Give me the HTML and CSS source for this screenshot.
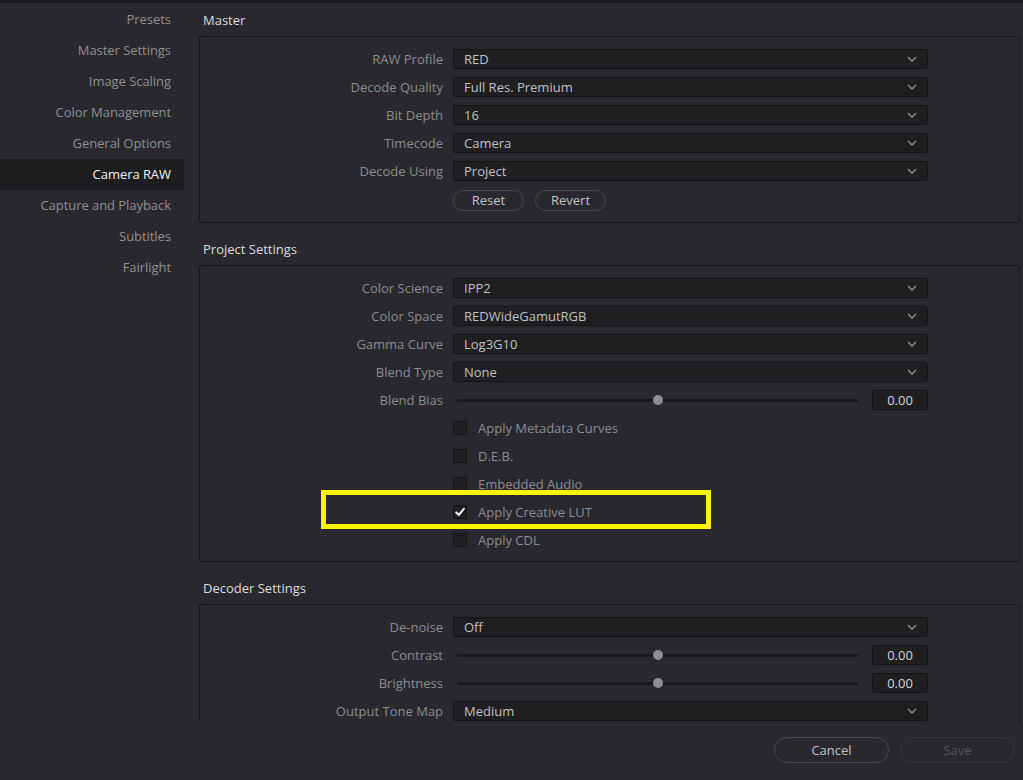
FILE: index.html
```html
<!DOCTYPE html>
<html>
<head>
<meta charset="utf-8">
<link rel="stylesheet" href="styles.css">
</head>
<body>
<div class="app">
  <div class="content">
    <nav class="sidebar">
      <div class="nav-item">Presets</div>
      <div class="nav-item">Master Settings</div>
      <div class="nav-item">Image Scaling</div>
      <div class="nav-item">Color Management</div>
      <div class="nav-item">General Options</div>
      <div class="nav-item active">Camera RAW</div>
      <div class="nav-item">Capture and Playback</div>
      <div class="nav-item">Subtitles</div>
      <div class="nav-item">Fairlight</div>
    </nav>
    <main class="main">
      <section class="section">
        <h2 class="section-title">Master</h2>
        <div class="box">
          <div class="row"><span class="label">RAW Profile</span><div class="select"><span>RED</span><svg class="chev" width="10" height="6" viewBox="0 0 10 6"><polyline points="1,1 5,5 9,1"/></svg></div></div>
          <div class="row"><span class="label">Decode Quality</span><div class="select"><span>Full Res. Premium</span><svg class="chev" width="10" height="6" viewBox="0 0 10 6"><polyline points="1,1 5,5 9,1"/></svg></div></div>
          <div class="row"><span class="label">Bit Depth</span><div class="select"><span>16</span><svg class="chev" width="10" height="6" viewBox="0 0 10 6"><polyline points="1,1 5,5 9,1"/></svg></div></div>
          <div class="row"><span class="label">Timecode</span><div class="select"><span>Camera</span><svg class="chev" width="10" height="6" viewBox="0 0 10 6"><polyline points="1,1 5,5 9,1"/></svg></div></div>
          <div class="row"><span class="label">Decode Using</span><div class="select"><span>Project</span><svg class="chev" width="10" height="6" viewBox="0 0 10 6"><polyline points="1,1 5,5 9,1"/></svg></div></div>
          <div class="row row-buttons"><span class="label"></span><div class="buttons"><button class="pill">Reset</button><button class="pill">Revert</button></div></div>
        </div>
      </section>

      <section class="section">
        <h2 class="section-title">Project Settings</h2>
        <div class="box">
          <div class="row"><span class="label">Color Science</span><div class="select"><span>IPP2</span><svg class="chev" width="10" height="6" viewBox="0 0 10 6"><polyline points="1,1 5,5 9,1"/></svg></div></div>
          <div class="row"><span class="label">Color Space</span><div class="select"><span>REDWideGamutRGB</span><svg class="chev" width="10" height="6" viewBox="0 0 10 6"><polyline points="1,1 5,5 9,1"/></svg></div></div>
          <div class="row"><span class="label">Gamma Curve</span><div class="select"><span>Log3G10</span><svg class="chev" width="10" height="6" viewBox="0 0 10 6"><polyline points="1,1 5,5 9,1"/></svg></div></div>
          <div class="row"><span class="label">Blend Type</span><div class="select"><span>None</span><svg class="chev" width="10" height="6" viewBox="0 0 10 6"><polyline points="1,1 5,5 9,1"/></svg></div></div>
          <div class="row"><span class="label">Blend Bias</span><div class="slider"><div class="track"><div class="thumb"></div></div><div class="value">0.00</div></div></div>
          <div class="row"><span class="label"></span><label class="check"><span class="box-check"></span><span>Apply Metadata Curves</span></label></div>
          <div class="row"><span class="label"></span><label class="check"><span class="box-check"></span><span>D.E.B.</span></label></div>
          <div class="row"><span class="label"></span><label class="check"><span class="box-check"></span><span>Embedded Audio</span></label></div>
          <div class="row highlighted"><span class="label"></span><label class="check"><span class="box-check checked"><svg width="12" height="12" viewBox="0 0 12 12"><polyline points="2.2,6.4 4.8,9 9.8,2.8"/></svg></span><span>Apply Creative LUT</span></label><div class="highlight"></div></div>
          <div class="row"><span class="label"></span><label class="check"><span class="box-check"></span><span>Apply CDL</span></label></div>
        </div>
      </section>

      <section class="section">
        <h2 class="section-title">Decoder Settings</h2>
        <div class="box">
          <div class="row"><span class="label">De-noise</span><div class="select"><span>Off</span><svg class="chev" width="10" height="6" viewBox="0 0 10 6"><polyline points="1,1 5,5 9,1"/></svg></div></div>
          <div class="row"><span class="label">Contrast</span><div class="slider"><div class="track"><div class="thumb"></div></div><div class="value">0.00</div></div></div>
          <div class="row"><span class="label">Brightness</span><div class="slider"><div class="track"><div class="thumb"></div></div><div class="value">0.00</div></div></div>
          <div class="row"><span class="label">Output Tone Map</span><div class="select"><span>Medium</span><svg class="chev" width="10" height="6" viewBox="0 0 10 6"><polyline points="1,1 5,5 9,1"/></svg></div></div>
        </div>
      </section>
    </main>
  </div>
  <footer class="footer">
    <button class="pill footer-btn">Cancel</button>
    <button class="pill footer-btn disabled">Save</button>
  </footer>
</div>
</body>
</html>
```

FILE: styles.css
```css
* { box-sizing: border-box; }

html, body {
  margin: 0;
  padding: 0;
  height: 100%;
}

body {
  background: #28282e;
  border-top: 3px solid #19191c;
  font-family: "Open Sans", "Noto Sans", sans-serif;
  font-size: 13px;
  color: #8e8e90;
  overflow: hidden;
}

.app {
  display: flex;
  flex-direction: column;
  height: 777px;
}

.content {
  display: flex;
  height: 719px;
  overflow: hidden;
}

.sidebar {
  width: 184px;
  flex: none;
  display: flex;
  flex-direction: column;
  padding-top: 1px;
}

.nav-item {
  height: 31px;
  line-height: 31px;
  text-align: right;
  padding-right: 13px;
  color: #8f8f92;
  white-space: nowrap;
  letter-spacing: -0.05px;
}

.nav-item.active {
  background: #1d1d20;
  color: #f2f2f2;
}

.main {
  flex: 1;
  padding: 7px 3px 0 15px;
  display: flex;
  flex-direction: column;
  gap: 16px;
}

.section-title {
  margin: 0 0 6px 4px;
  font-size: 13px;
  font-weight: normal;
  line-height: 20px;
  color: #dcdcdc;
}

.box {
  border: 1px solid #151518;
  border-radius: 3px;
  padding: 12px 0 11px 0;
  display: flex;
  flex-direction: column;
  gap: 8px;
}

.row {
  display: grid;
  grid-template-columns: 243px 475px;
  column-gap: 10px;
  height: 20px;
  align-items: center;
}

.row.highlighted {
  position: relative;
}

.label {
  text-align: right;
  color: #8c8c8f;
  line-height: 20px;
  white-space: nowrap;
}

.select {
  height: 20px;
  background: #1f1f21;
  border: 1px solid #131315;
  border-radius: 2px;
  display: flex;
  align-items: center;
  justify-content: space-between;
  padding: 0 10px 0 10px;
  color: #c0c0c2;
}

.chev polyline {
  fill: none;
  stroke: #8a8a8c;
  stroke-width: 1.5;
}

.row-buttons {
  height: 21px;
  margin-top: 1px;
}

.buttons {
  display: flex;
  gap: 11px;
}

.pill {
  font-family: inherit;
  font-size: 13px;
  background: transparent;
  color: #c2c2c4;
  border: 1px solid #46464b;
  border-radius: 11px;
  height: 21px;
  width: 71px;
  padding: 0;
  line-height: 19px;
}

.slider {
  display: flex;
  align-items: center;
  padding-left: 4px;
  height: 20px;
}

.track {
  flex: 1;
  height: 3px;
  background: #19191b;
  border-radius: 2px;
  position: relative;
  margin-right: 14px;
}

.thumb {
  position: absolute;
  left: 50%;
  top: 50%;
  width: 10px;
  height: 10px;
  margin: -5px 0 0 -5px;
  border-radius: 50%;
  background: #8e8e90;
}

.value {
  width: 56px;
  height: 20px;
  background: #1f1f21;
  border: 1px solid #131315;
  border-radius: 2px;
  color: #d6d6d8;
  text-align: center;
  line-height: 18px;
}

.check {
  display: flex;
  align-items: center;
  gap: 11px;
  color: #8c8c8f;
}

.box-check {
  width: 14px;
  height: 14px;
  background: #1f1f21;
  border: 1px solid #131315;
  border-radius: 2px;
  display: flex;
  align-items: center;
  justify-content: center;
}

.box-check svg polyline {
  fill: none;
  stroke: #ffffff;
  stroke-width: 2;
  stroke-linecap: round;
  stroke-linejoin: round;
}

.highlight {
  position: absolute;
  left: 121px;
  top: -12px;
  width: 390px;
  height: 39px;
  border: 5px solid #fff500;
  pointer-events: none;
}

.footer {
  flex: 1;
  display: flex;
  justify-content: flex-end;
  align-items: flex-start;
  gap: 11px;
  padding: 15px 8px 0 0;
}

.footer-btn {
  width: 115px;
  height: 26px;
  border-radius: 13px;
  line-height: 24px;
}

.footer-btn.disabled {
  color: #56565a;
  border-color: #38383d;
}
```
